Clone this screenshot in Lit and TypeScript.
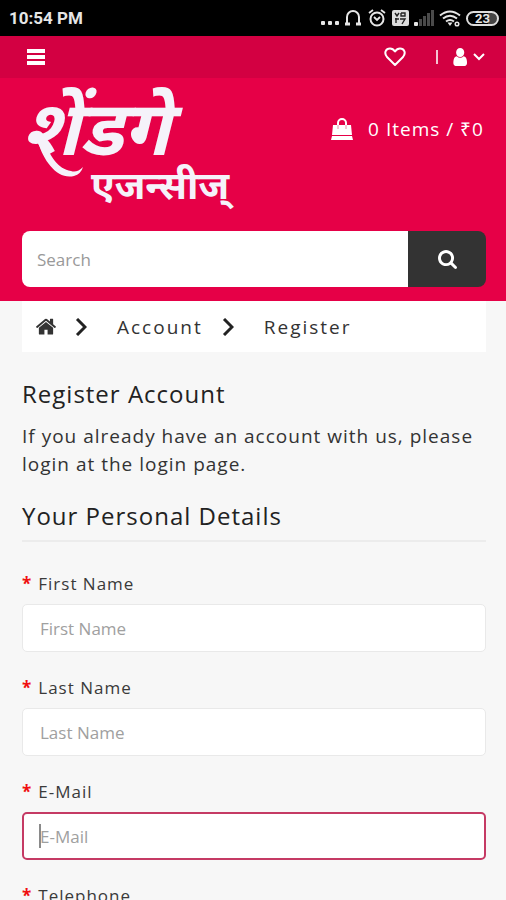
import { LitElement, html, css, svg } from "lit";
import { customElement, property } from "lit/decorators.js";

const homeIcon = svg`<path fill="currentColor" d="M1472 992v480q0 26-19 45t-45 19h-384v-384h-256v384h-384q-26 0-45-19t-19-45v-480q0-1 .5-3t.5-3l575-474 575 474q1 2 1 6zm223-69l-62 74q-8 9-21 11h-3q-13 0-21-7l-692-577-692 577q-12 8-24 7-13-2-21-11l-62-74q-8-10-7-23.5t11-21.5l719-599q32-26 76-26t76 26l244 204v-195q0-14 9-23t23-9h192q14 0 23 9t9 23v408l219 182q10 8 11 21.5t-7 23.5z"/>`;
const searchIcon = svg`<path fill="currentColor" d="M1216 832q0-185-131.5-316.5t-316.5-131.5-316.5 131.5-131.5 316.5 131.5 316.5 316.5 131.5 316.5-131.5 131.5-316.5zm512 832q0 52-38 90t-90 38q-54 0-90-38l-343-342q-179 124-399 124-143 0-273.5-55.5t-225-150-150-225-55.5-273.5 55.5-273.5 150-225 225-150 273.5-55.5 273.5 55.5 225 150 150 225 55.5 273.5q0 220-124 399l343 343q37 37 37 90z"/>`;
const userIcon = svg`<path fill="currentColor" d="M1536 1399q0 109-62.5 187t-150.5 78h-854q-88 0-150.5-78t-62.5-187q0-85 8.5-160.5t31.5-152 58.5-131 94-89 134.5-34.5q131 128 313 128t313-128q76 0 134.5 34.5t94 89 58.5 131 31.5 152 8.5 160.5zm-256-887q0 159-112.5 271.5t-271.5 112.5-271.5-112.5-112.5-271.5 112.5-271.5 271.5-112.5 271.5 112.5 112.5 271.5z"/>`;

@customElement("status-bar")
class StatusBar extends LitElement {
  static styles = css`
    :host {
      display: flex;
      align-items: center;
      justify-content: space-between;
      height: 36px;
      padding: 0 7px 0 9px;
      background: #000;
      color: #e6e6e6;
      font-family: Roboto, sans-serif;
      letter-spacing: 0;
    }
    .time { font-size: 17px; font-weight: 700; }
    .icons { display: flex; align-items: center; gap: 5px; }
    svg { display: block; }
    .battery {
      box-sizing: border-box;
      width: 33px;
      height: 15px;
      border: 2px solid #ddd;
      border-radius: 8px;
      font-size: 13px;
      line-height: 11px;
      font-weight: 700;
      text-align: center;
      background: linear-gradient(to right, #000 70%, #444 70%);
    }
  `;
  render() {
    return html`
      <span class="time">10:54 PM</span>
      <div class="icons">
        <svg width="18" height="18" viewBox="0 0 18 18" fill="#e6e6e6"><rect y="12" width="4" height="4" rx="1"/><rect x="7" y="12" width="4" height="4" rx="1"/><rect x="14" y="12" width="4" height="4" rx="1"/></svg>
        <svg width="18" height="18" viewBox="0 0 18 18" fill="none" stroke="#e6e6e6" stroke-width="2"><path d="M3 15V8a6 6 0 0 1 12 0v7"/><path d="M1 15h5M12 15h5" stroke-width="3"/></svg>
        <svg width="20" height="18" viewBox="0 0 20 18" fill="none" stroke="#e6e6e6" stroke-width="2"><circle cx="10" cy="10" r="6.5"/><path d="M2 4l4-3M18 4l-4-3M7 8l3 3 3-3" stroke-width="1.8"/></svg>
        <svg width="17" height="16" viewBox="0 0 17 16"><rect width="17" height="16" rx="2" fill="#ddd"/><path d="M3 3l2 3 2-3M9 3v3h4V3H9M4 8v5M8 9h5l-3 5M3 9h4" fill="none" stroke="#222" stroke-width="1.4"/></svg>
        <svg width="20" height="16" viewBox="0 0 20 16"><rect y="12" width="4" height="4" rx="1" fill="#e6e6e6"/><g fill="#4a4a4a"><rect x="5" y="9" width="3" height="7"/><rect x="9" y="6" width="3" height="10"/><rect x="13" y="3" width="3" height="13"/><rect x="17" y="0" width="3" height="16"/></g></svg>
        <svg width="22" height="18" viewBox="0 0 22 18" fill="none" stroke="#e6e6e6" stroke-width="2"><path d="M1 6.500q10-8 20 0M4 9.500q7-5.500 14 0M7 12.500q4-3 8 0"/><path d="M8.500 13.500h5L11 17z" fill="#e6e6e6" stroke="none"/><circle cx="18" cy="15" r="1.800" stroke-width="1.5"/></svg>
        <span class="battery">23</span>
      </div>
    `;
  }
}

@customElement("form-field")
class FormField extends LitElement {
  @property() label = "";
  @property() type = "text";
  @property({ type: Boolean, reflect: true }) active = false;
  static styles = css`
    :host { display: block; margin-bottom: 22px; }
    label { display: block; font-size: 17px; line-height: 28px; color: #3a3a3a; letter-spacing: 1px; margin-bottom: 6px; }
    .star { color: #f01010; font-weight: 700; margin-right: 6px; }
    .box { position: relative; }
    input {
      box-sizing: border-box;
      display: block;
      width: 100%;
      height: 48px;
      padding: 0 17px;
      border: 1px solid #e9e9e9;
      border-radius: 5px;
      background: #fff;
      color: #333;
      font: 17px "Open Sans", sans-serif;
      outline: none;
    }
    input::placeholder { color: #a0a0a0; opacity: 1; }
    :host([active]) input { border: 2px solid #c53a64; padding: 0 16px; }
    .caret { position: absolute; left: 17px; top: 12px; width: 2px; height: 24px; background: #8a8a8a; }
  `;
  render() {
    return html`
      <label for="field"><span class="star">*</span>${this.label}</label>
      <div class="box">
        <input id="field" type=${this.type} placeholder=${this.label} />
        ${this.active ? html`<span class="caret"></span>` : null}
      </div>
    `;
  }
}

@customElement("app-root")
class AppRoot extends LitElement {
  static styles = css`
    :host {
      display: block;
      background: #f7f7f7;
      color: #333;
      font-family: "Open Sans", sans-serif;
      letter-spacing: 1px;
      height: 100vh;
      overflow: hidden;
    }
    svg { display: block; }
    button { border: 0; padding: 0; background: none; color: inherit; cursor: pointer; }
    a { color: inherit; text-decoration: none; }
    .topbar {
      display: flex;
      align-items: center;
      justify-content: space-between;
      height: 42px;
      padding: 0 21px 0 27px;
      background: #d30042;
      color: #fff;
    }
    .tools { display: flex; align-items: center; }
    .divider { width: 2px; height: 14px; background: #f5c3d2; margin: 0 14px 0 30px; }
    .account { display: flex; align-items: center; gap: 6px; }
    .header { background: #e60047; color: #fff; padding: 12px 20px 14px 22px; }
    .brandrow { display: flex; justify-content: space-between; height: 141px; }
    .logo { display: block; position: relative; width: 212px; color: #f5f2fa; font-family: "Noto Sans Devanagari", "Noto Sans", "Lohit Devanagari", sans-serif; font-weight: 700; letter-spacing: 0; white-space: nowrap; }
    .logo-main { display: block; font-size: 76px; line-height: 94px; font-style: italic; height: 72px; }
    .logo-sub { display: block; font-size: 39px; line-height: 56px; padding-left: 69px; }
    .tail { position: absolute; left: 16px; top: 52px; }
    .cart { display: flex; align-items: center; gap: 15px; align-self: flex-start; height: 28px; margin-top: 25px; padding-right: 2px; font-size: 19px; }
    .search { display: flex; height: 56px; border-radius: 8px; overflow: hidden; }
    .search input {
      flex: 1;
      min-width: 0;
      border: 0;
      padding: 0 15px;
      background: #fff;
      font: 17px "Open Sans", sans-serif;
      outline: none;
    }
    .search input::placeholder { color: #999; opacity: 1; }
    .search button { display: grid; place-items: center; width: 78px; background: #333; color: #fff; }
    .page { padding: 0 20px 0 22px; }
    .crumbs { display: flex; align-items: center; height: 51px; padding-left: 14px; background: #fff; font-size: 19px; letter-spacing: 2px; }
    .chevron { margin: 0 30px 0 19px; }
    h1, h2 { margin: 0; font-size: 24px; line-height: 32px; font-weight: 400; color: #222; }
    h1 { margin-top: 26px; }
    p { margin: 12px 0 22px; font-size: 19px; line-height: 28px; }
    h2 { padding-bottom: 8px; border-bottom: 2px solid #ececec; margin-bottom: 28px; }
  `;
  private chevron() {
    return html`<svg class="chevron" width="12" height="18" viewBox="0 0 12 18" fill="none" stroke="#222" stroke-width="3"><path d="M2 1l8 8-8 8"/></svg>`;
  }
  render() {
    return html`
      <status-bar></status-bar>
      <nav class="topbar">
        <button aria-label="Menu"><svg width="18" height="16" viewBox="0 0 18 16" fill="#fff"><rect width="18" height="4"/><rect y="6" width="18" height="4"/><rect y="12" width="18" height="4"/></svg></button>
        <div class="tools">
          <a href="#" aria-label="Wish list"><svg width="22" height="20" viewBox="0 0 22 20" fill="none" stroke="#fff" stroke-width="2"><path d="M11 18L3 10C-.5 5.500 2 1.500 6 1.500c2.500 0 4 1.500 5 3 1-1.500 2.500-3 5-3 4 0 6.500 4 3 8.500z" stroke-linejoin="round"/></svg></a>
          <span class="divider"></span>
          <button class="account" aria-label="My account"><svg width="15" height="18" viewBox="128 128 1408 1536" preserveAspectRatio="none">${userIcon}</svg><svg width="12" height="8" viewBox="0 0 12 8" fill="none" stroke="#fff" stroke-width="2"><path d="M1 1l5 5 5-5"/></svg></button>
        </div>
      </nav>
      <header class="header">
        <div class="brandrow">
          <a class="logo" href="#"><span class="logo-main">शेंडगे</span><span class="logo-sub">एजन्सीज्</span><svg class="tail" width="48" height="38" viewBox="0 0 48 38"><path d="M0 0C6 20 20 38 36 34Q43 32 45 25Q39 31 33 29C20 27 12 14 8 2z" fill="#f5f2fa"/></svg></a>
          <a class="cart" href="#"><svg width="22" height="22" viewBox="0 0 22 22"><path d="M2 7h18l1 10H1zM1 18h20l1 4H0z" fill="#fff"/><path d="M7 10V5a4 4 0 0 1 8 0v5" fill="none" stroke="#fff" stroke-width="2"/><path d="M7 7v4M15 7v4" stroke="#e68aa8" stroke-width="1"/></svg><span>0 Items / ₹0</span></a>
        </div>
        <form class="search">
          <input type="search" placeholder="Search" aria-label="Search" />
          <button type="button" aria-label="Search"><svg width="19" height="19" viewBox="64 128 1664 1664">${searchIcon}</svg></button>
        </form>
      </header>
      <main class="page">
        <nav class="crumbs">
          <a href="#" aria-label="Home"><svg width="20" height="17" viewBox="89 220 1615 1320">${homeIcon}</svg></a>
          ${this.chevron()}<a href="#">Account</a>${this.chevron()}<a href="#">Register</a>
        </nav>
        <h1>Register Account</h1>
        <p>If you already have an account with us, please login at the <a href="#">login page</a>.</p>
        <h2>Your Personal Details</h2>
        <form>
          <form-field label="First Name"></form-field>
          <form-field label="Last Name"></form-field>
          <form-field label="E-Mail" type="email" active></form-field>
          <form-field label="Telephone" type="tel"></form-field>
        </form>
      </main>
    `;
  }
}
